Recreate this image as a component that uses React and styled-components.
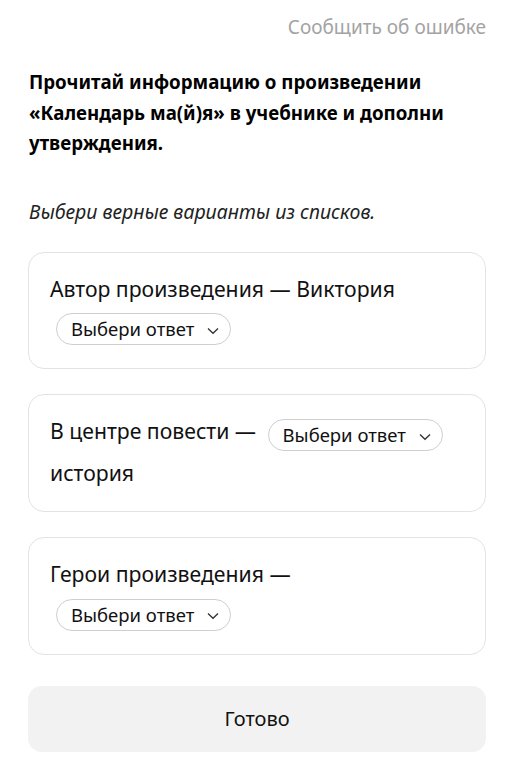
import React from 'react';
import styled, { createGlobalStyle } from 'styled-components';

const GlobalStyle = createGlobalStyle`
  body {
    margin: 0;
    background: #ffffff;
    font-family: 'Noto Sans', 'Open Sans', sans-serif;
    color: #111111;
  }
`;

const Page = styled.div`
  width: 508px;
  height: 763px;
  box-sizing: border-box;
  padding: 14px 22px 0 28px;
  overflow: hidden;
`;

const ReportLink = styled.div`
  text-align: right;
  font-size: 19px;
  line-height: 26px;
  color: #a3a3a3;
`;

const Heading = styled.h1`
  margin: 27px 0 0 1px;
  font-size: 18.7px;
  line-height: 30.5px;
  font-weight: 700;
  color: #000000;
`;

const Hint = styled.p`
  margin: 40px 0 0 1px;
  font-size: 19.5px;
  line-height: 26px;
  font-style: italic;
  color: #222222;
`;

const Cards = styled.div`
  display: flex;
  flex-direction: column;
  gap: 25px;
  margin-top: 27px;
`;

const Card = styled.div`
  border: 1px solid #e3e3e3;
  border-radius: 16px;
  padding: 17px 22px 20px 21px;
  font-size: 21.2px;
  line-height: 37px;
  color: #111111;
`;

const Select = styled.span`
  display: inline-flex;
  align-items: center;
  vertical-align: middle;
  box-sizing: border-box;
  height: 32px;
  margin: 6px 0 3px 6px;
  padding: 0 11px 0 14px;
  border: 1px solid #cfcfcf;
  border-radius: 16px;
  font-size: 18.5px;
  line-height: 30px;
  color: #111111;
  gap: 13px;
`;

const Chevron = () => (
  <svg width="12" height="8" viewBox="0 0 12 8" fill="none" style={{ marginTop: 3 }}>
    <path d="M1 1.5 L6 6.3 L11 1.5" stroke="#333" strokeWidth="1.3" />
  </svg>
);

const Done = styled.button`
  display: block;
  width: 100%;
  height: 66px;
  margin-top: 31px;
  border: none;
  border-radius: 14px;
  background: #f2f2f2;
  font-family: inherit;
  font-size: 20px;
  color: #111111;
`;

const Choice = () => (
  <Select>
    Выбери ответ
    <Chevron />
  </Select>
);

export default function App() {
  return (
    <Page>
      <GlobalStyle />
      <ReportLink>Сообщить об ошибке</ReportLink>
      <Heading>
        Прочитай информацию о произведении «Календарь ма(й)я» в учебнике и дополни утверждения.
      </Heading>
      <Hint>Выбери верные варианты из списков.</Hint>
      <Cards>
        <Card>
          Автор произведения — Виктория <Choice />
        </Card>
        <Card>
          В центре повести — <Choice /> история
        </Card>
        <Card>
          Герои произведения — <Choice />
        </Card>
      </Cards>
      <Done>Готово</Done>
    </Page>
  );
}
